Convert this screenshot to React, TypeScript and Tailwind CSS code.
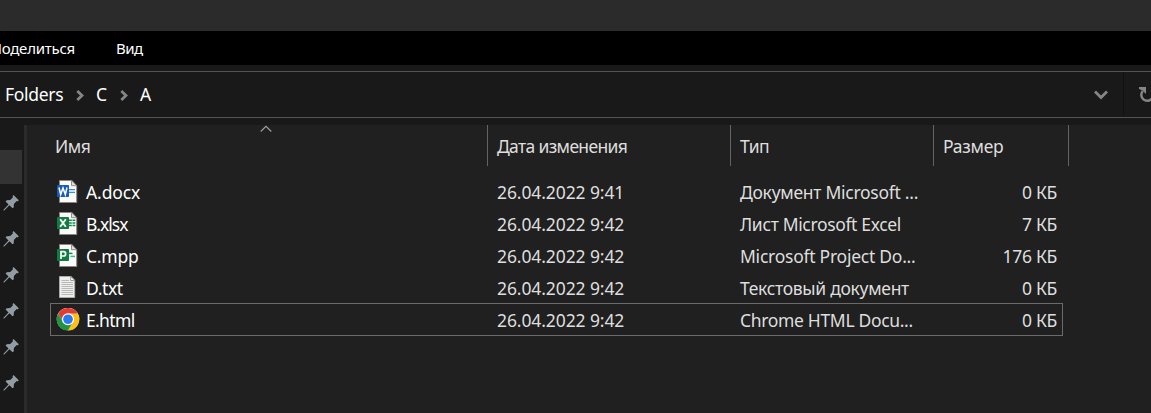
import type { ReactNode } from 'react';

type FileRow = {
  icon: ReactNode;
  name: string;
  nameClass: string;
  date: string;
  type: string;
  typeClass: string;
  size: string;
  selected?: boolean;
};

function Page() {
  return (
    <>
      <path d="M3.5 .5H16L20.700 5.700V22.500H3.5Z" fill="#fafafa" stroke="#8b8580" strokeWidth="1" />
      <path d="M15.500 .5V5.700H20.700Z" fill="#dedede" stroke="#8b8580" strokeWidth=".9" />
    </>
  );
}

function WordIcon() {
  return (
    <svg width="24" height="24" viewBox="0 0 24 24">
      <Page />
      <path d="M13 9.700h6M13 12.400h6" stroke="#3b8ee0" strokeWidth="1.300" />
      <rect x="1" y="5" width="12" height="12" rx=".8" fill="#185abd" />
      <path d="M3 7.500l1.700 7L7 8l2.300 6.500L11 7.500" fill="none" stroke="#fff" strokeWidth="1.500" />
    </svg>
  );
}

function ExcelIcon() {
  return (
    <svg width="24" height="24" viewBox="0 0 24 24">
      <Page />
      <path d="M13 8.200h2.800M13 10.900h2.800M13 13.600h2.800M16.500 8.200h2.800M16.500 10.900h2.800M16.500 13.600h2.800" stroke="#188a48" strokeWidth="1.500" />
      <rect x="1" y="5" width="12" height="12" rx=".8" fill="#107c41" />
      <path d="M4.200 7.300l5.600 7.400M9.800 7.300l-5.600 7.400" stroke="#fff" strokeWidth="1.900" />
    </svg>
  );
}

function ProjectIcon() {
  return (
    <svg width="24" height="24" viewBox="0 0 24 24">
      <Page />
      <path d="M13 9.400h3.500" stroke="#188a48" strokeWidth="1.500" />
      <path d="M14.500 12.400h4.500" stroke="#33c481" strokeWidth="1.500" />
      <rect x="1" y="5" width="12" height="12" rx=".8" fill="#107c41" />
      <path d="M5 15V7.700h2.500a2.100 2.100 0 0 1 0 4.300H5" fill="none" stroke="#fff" strokeWidth="1.700" />
    </svg>
  );
}

function TextIcon() {
  return (
    <svg width="24" height="24" viewBox="0 0 24 24">
      <path d="M3.500 .500H15L18.700 4V21.500H3.500Z" fill="#eeeeec" stroke="#aaa" />
      <path d="M14.700 .500V4.500H18.700Z" fill="#fff" stroke="#888" strokeWidth=".8" />
      <path d="M5.500 4.500H13M5.500 6.500H17M5.500 8.500H17M5.500 10.500H17M5.500 12.500H17M5.500 14.500H17M5.500 16.500H17M5.500 18.500H17" stroke="#aaa" strokeWidth=".8" />
    </svg>
  );
}

function ChromeIcon() {
  return (
    <svg width="24" height="24" viewBox="0 0 48 48">
      <circle cx="24" cy="22" r="22.500" fill="#fff" />
      <g transform="translate(0 -1.500)">
        <path d="M4.500 12.750A22.500 22.500 0 0 1 43.500 12.750H24A11.250 11.250 0 0 0 14.260 29.630Z" fill="#e33b2e" />
        <path d="M43.500 12.750A22.500 22.500 0 0 1 24 46.500L33.740 29.630A11.250 11.250 0 0 0 24 12.750Z" fill="#fbc116" />
        <path d="M24 46.500A22.500 22.500 0 0 1 4.500 12.750L14.260 29.630A11.250 11.250 0 0 0 33.740 29.630Z" fill="#229342" />
        <circle cx="24" cy="24" r="12" fill="#fff" />
        <circle cx="24" cy="24" r="9.700" fill="#2b7bf0" />
      </g>
    </svg>
  );
}

function Pin() {
  return (
    <svg width="16" height="16" viewBox="0 0 16 16">
      <path d="M10.500 0L15.800 5.300L14.600 6.400L13.700 6L10.900 8.900L10.700 12.400L9.600 13.300L6.400 10.300L1 15.700L.3 15L5.500 9.400L2.600 6.500L3.700 5.300L7.200 5.100L10 2.300L9.500 1.200Z" fill="#929ca4" />
    </svg>
  );
}

function Crumb() {
  return (
    <svg width="8" height="11" viewBox="0 0 8 11">
      <path d="M1.300 1L6 5.500L1.300 10" fill="none" stroke="#858585" strokeWidth="2.800" />
    </svg>
  );
}

const files: FileRow[] = [
  { icon: <WordIcon />, name: 'A.docx', nameClass: 'tracking-[-0.1px]', date: '26.04.2022 9:41', type: 'Документ Microsoft ...', typeClass: 'tracking-[-0.27px]', size: '0 КБ' },
  { icon: <ExcelIcon />, name: 'B.xlsx', nameClass: 'tracking-[-0.95px]', date: '26.04.2022 9:42', type: 'Лист Microsoft Excel', typeClass: 'tracking-[-0.35px]', size: '7 КБ' },
  { icon: <ProjectIcon />, name: 'C.mpp', nameClass: 'tracking-[-0.2px]', date: '26.04.2022 9:42', type: 'Microsoft Project Do...', typeClass: 'tracking-[-0.25px]', size: '176 КБ' },
  { icon: <TextIcon />, name: 'D.txt', nameClass: 'tracking-[-0.4px]', date: '26.04.2022 9:42', type: 'Текстовый документ', typeClass: 'tracking-[-0.3px]', size: '0 КБ' },
  { icon: <ChromeIcon />, name: 'E.html', nameClass: 'tracking-[-0.65px]', date: '26.04.2022 9:42', type: 'Chrome HTML Docu...', typeClass: 'tracking-[-0.33px]', size: '0 КБ', selected: true },
];

export default function App() {
  return (
    <div className="flex h-[413px] w-[1151px] flex-col overflow-hidden bg-[#191919] font-['Noto_Sans','Open_Sans',sans-serif] text-[17.500px] whitespace-nowrap text-[#dedede]">
      <div className="h-[31px] shrink-0 bg-[#2b2b2b]" />
      <nav className="flex h-[34px] shrink-0 items-center bg-black pb-px text-[15px] leading-[20px] text-white">
        <span className="-ml-[9px] w-[125px] tracking-[-0.25px]">Поделиться</span>
        <span className="tracking-[-0.5px]">Вид</span>
      </nav>
      <div className="mt-[6px] flex h-[47px] shrink-0 items-center border-y border-[#535353] text-white">
        <span className="w-[71px] pl-[5px] tracking-[-0.3px]">Folders</span>
        <span className="ml-[5px] w-[20px] pt-px"><Crumb /></span>
        <span className="w-[24px]">C</span>
        <span className="w-[20px] pt-px"><Crumb /></span>
        <span>A</span>
        <svg className="mt-px ml-auto" width="14" height="10" viewBox="0 0 14 10">
          <path d="M1 1.500L7 7.500L13 1.500" fill="none" stroke="#858585" strokeWidth="2.800" />
        </svg>
        <div className="ml-[15px] flex h-full w-[28px] items-center border-l border-[#111] pl-[15px]">
          <svg className="shrink-0" width="16" height="18" viewBox="0 0 16 18">
            <path d="M3.700 5A6 6 0 1 0 12.500 4.500" fill="none" stroke="#858585" strokeWidth="2.500" />
            <path d="M0 1H7V8L5 6L3.500 4.500L0 3Z" fill="#858585" />
          </svg>
        </div>
      </div>
      <div className="mt-[7px] flex min-h-0 flex-1">
        <aside className="flex w-[24px] shrink-0 flex-col pt-[25px]">
          <div className="h-[34px] w-[22px] bg-[#333]" />
          <div className="mt-[11px] flex flex-col gap-5 pl-[3px]">
            <Pin /><Pin /><Pin /><Pin /><Pin /><Pin />
          </div>
        </aside>
        <main className="relative flex-1 border-l-[3px] border-[#2b2b2b] bg-[#202020] pl-[23px]">
          <svg className="absolute top-0 left-[233px]" width="12" height="8" viewBox="0 0 12 8">
            <path d="M.700 6.500L6 1.300L11.300 6.500" fill="none" stroke="#a0a0a0" strokeWidth="1.100" />
          </svg>
          <div className="flex h-[41px] items-center [&>div]:flex [&>div]:h-full [&>div]:items-center [&>div]:border-r [&>div]:border-[#636363] [&>div]:pt-[2px]">
            <div className="w-[438px] pl-[5px] tracking-[-0.5px]">Имя</div>
            <div className="w-[243px] pl-[9px] tracking-[-0.65px]">Дата изменения</div>
            <div className="w-[203px] pl-[9px] tracking-[-0.5px]">Тип</div>
            <div className="w-[135px] pl-[9px] tracking-[-0.3px]">Размер</div>
          </div>
          <div className="pt-[10px]">
            {files.map((f) => (
              <div
                key={f.name}
                className={`flex w-[1013px] items-center ${f.selected ? '-mt-px h-[33px] pt-px outline-1 -outline-offset-1 outline-[#6b6b6b]' : 'h-8'}`}
              >
                <span className="w-[36px] pl-[6px]">{f.icon}</span>
                <span className={`w-[411px] pt-px text-white ${f.nameClass}`}>{f.name}</span>
                <span className="w-[243px] pt-px tracking-[-0.1px]">{f.date}</span>
                <span className={`w-[200px] pt-px ${f.typeClass}`}>{f.type}</span>
                <span className="flex-1 pt-px pr-[6px] text-right tracking-[-0.3px]">{f.size}</span>
              </div>
            ))}
          </div>
        </main>
      </div>
    </div>
  );
}
